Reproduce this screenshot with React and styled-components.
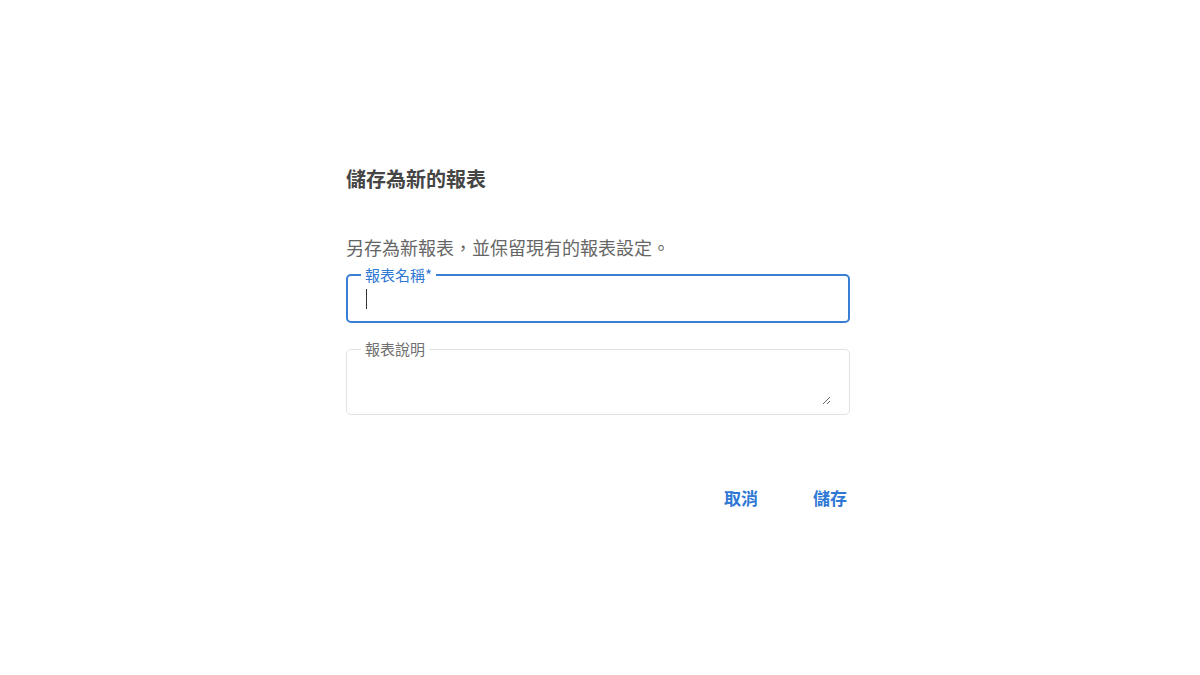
import React from "react";
import styled, { createGlobalStyle } from "styled-components";

const GlobalStyle = createGlobalStyle`
  html, body { margin: 0; padding: 0; background: #ffffff; }
  body {
    font-family: "Noto Sans CJK TC", "Noto Sans", "Liberation Sans", sans-serif;
    -webkit-font-smoothing: antialiased;
  }
`;

const Page = styled.div`
  width: 1200px;
  height: 675px;
  display: flex;
  justify-content: center;
  padding-right: 4px;
  box-sizing: border-box;
`;

const Dialog = styled.div`
  width: 504px;
  padding-top: 164px;
  display: flex;
  flex-direction: column;
`;

const Title = styled.h2`
  margin: 0;
  font-size: 20px;
  line-height: 30px;
  font-weight: 700;
  color: #454545;
`;

const Description = styled.p`
  margin: 40px 0 4px;
  font-size: 18px;
  line-height: 27px;
  color: #666666;
`;

const Field = styled.fieldset`
  margin: 0 0 ${(p) => p.$gap || 0}px;
  padding: 0 ${(p) => (p.$focused ? 13 : 14)}px;
  border: ${(p) => (p.$focused ? "2px solid #3a7fd6" : "1px solid #e2e2e2")};
  border-radius: 5px;
  min-width: 0;
  display: flex;
  flex-direction: column;
`;

const Legend = styled.legend`
  padding: 0 4px;
  font-size: 15px;
  line-height: 20px;
  color: ${(p) => (p.$focused ? "#2f78d4" : "#707070")};
`;

const InputRow = styled.div`
  display: flex;
  align-items: flex-start;
  height: 36px;
  padding-top: 4px;
  box-sizing: border-box;
  padding-left: 5px;
`;

const Caret = styled.span`
  display: block;
  width: 1px;
  height: 20px;
  background: #333333;
`;

const TextInput = styled.input`
  flex: 1;
  border: none;
  outline: none;
  font: inherit;
  font-size: 16px;
  height: 20px;
  padding: 0;
  background: transparent;
`;

const TextArea = styled.textarea`
  display: block;
  box-sizing: border-box;
  width: calc(100% - 4px);
  height: 46px;
  margin: 0 4px 9px 0;
  border: none;
  outline: none;
  resize: vertical;
  font: inherit;
  font-size: 16px;
  background: transparent;
`;

const Actions = styled.div`
  display: flex;
  justify-content: flex-end;
  gap: 48px;
  margin-top: 64px;
`;

const TextButton = styled.button`
  border: none;
  background: transparent;
  padding: 6px 3px 6px 4px;
  font-family: inherit;
  font-size: 17px;
  line-height: 25px;
  font-weight: 700;
  color: #2f78d4;
  cursor: pointer;
`;

export default function App() {
  return (
    <>
      <GlobalStyle />
      <Page>
        <Dialog>
          <Title>儲存為新的報表</Title>
          <Description>另存為新報表，並保留現有的報表設定。</Description>
          <Field $focused $gap={16}>
            <Legend $focused>報表名稱*</Legend>
            <InputRow>
              <Caret />
              <TextInput aria-label="報表名稱" />
            </InputRow>
          </Field>
          <Field>
            <Legend>報表說明</Legend>
            <TextArea aria-label="報表說明" />
          </Field>
          <Actions>
            <TextButton>取消</TextButton>
            <TextButton>儲存</TextButton>
          </Actions>
        </Dialog>
      </Page>
    </>
  );
}
